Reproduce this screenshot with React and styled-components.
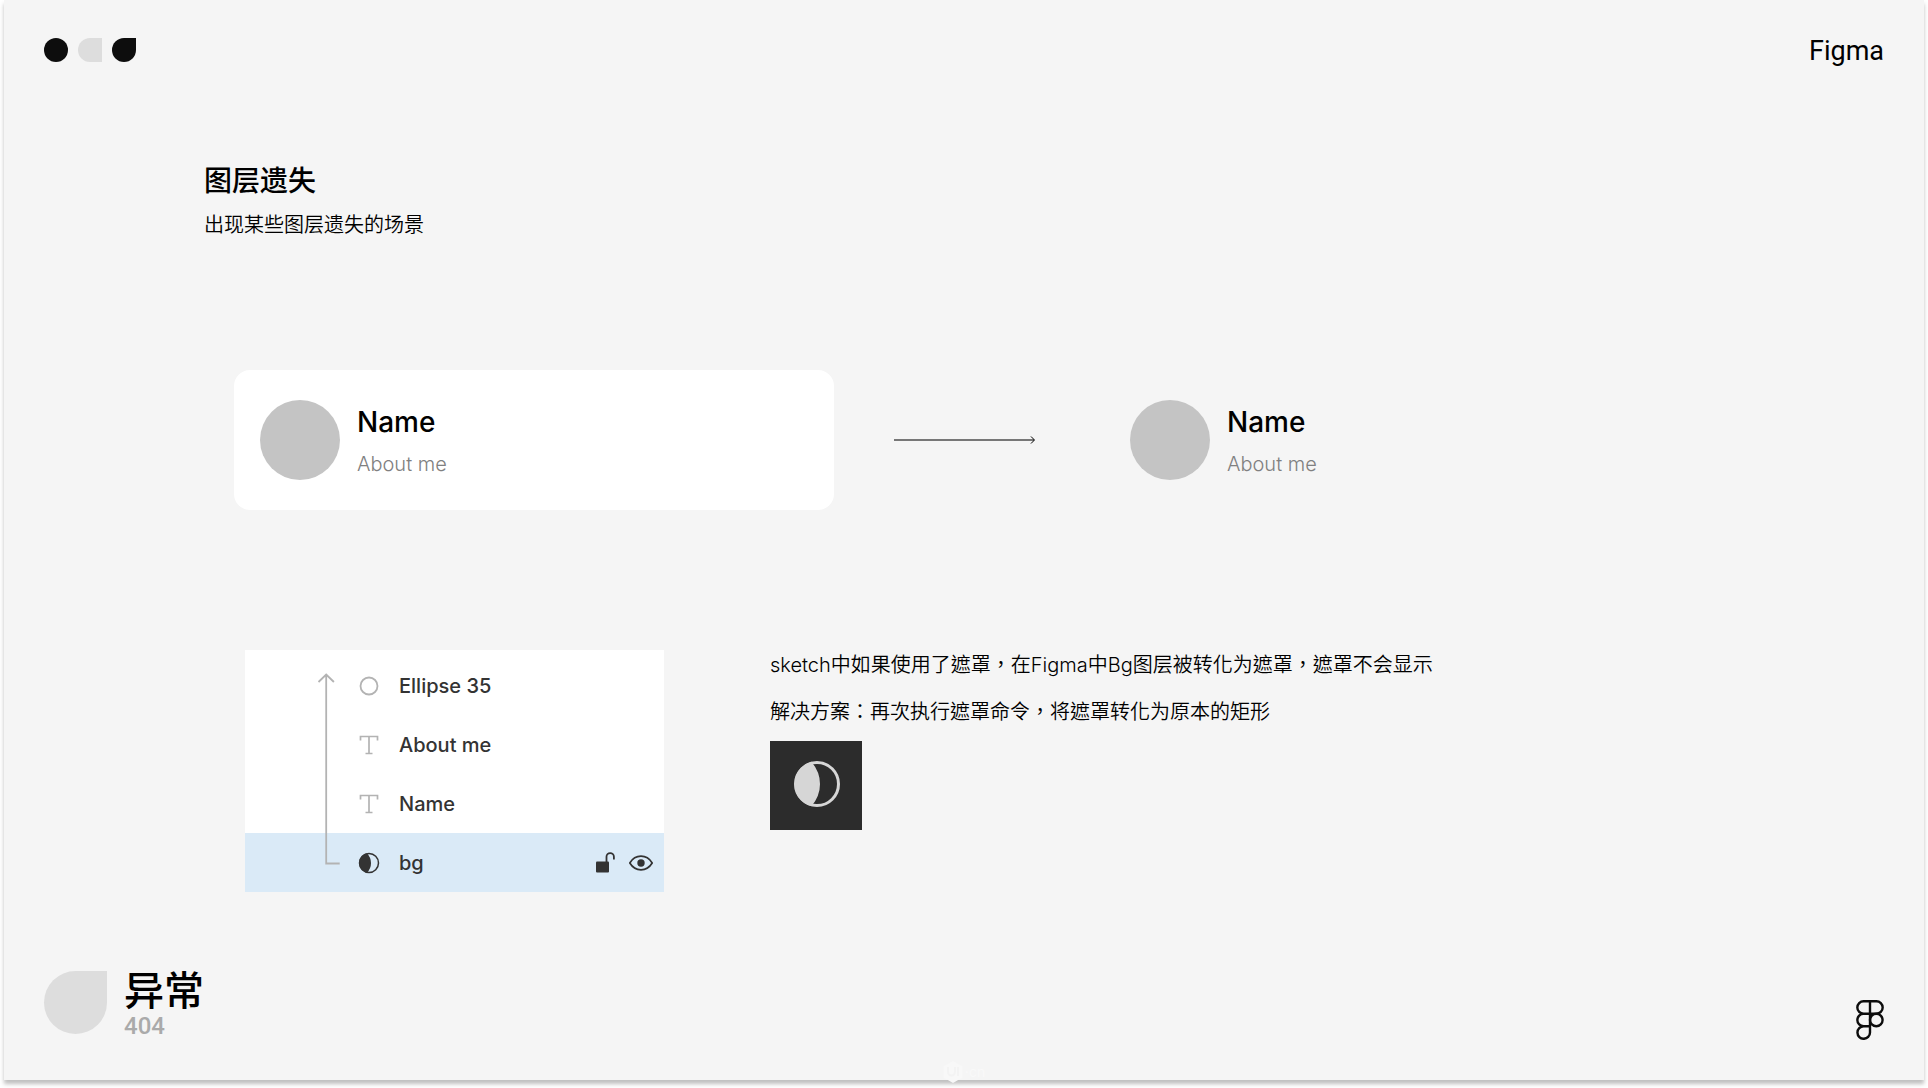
import styled, { createGlobalStyle } from "styled-components";

const layers = [
  { name: "Ellipse 35", type: "ellipse" },
  { name: "About me", type: "text" },
  { name: "Name", type: "text" },
  { name: "bg", type: "mask", selected: true },
];

function LayerIcon({ type }) {
  if (type === "ellipse") {
    return (
      <Icon viewBox="0 0 22 22" $size={22}>
        <circle cx="11" cy="11" r="8.5" stroke="#b3b3b3" strokeWidth="1.8" />
      </Icon>
    );
  }
  if (type === "text") {
    return (
      <Icon viewBox="0 0 22 22" $size={22}>
        <path
          d="M2.5 6.5V2.5h17v4M11 2.5v17M7.5 19.5h7"
          stroke="#b3b3b3"
          strokeWidth="1.7"
        />
      </Icon>
    );
  }
  return (
    <Icon viewBox="0 0 22 22" $size={22}>
      <circle cx="11" cy="11" r="9.5" stroke="#333" strokeWidth="1.5" />
      <path d="M9 1.2A10 10 0 0 0 9 20.8Q13 16.5 13 11T9 1.2Z" fill="#333" />
    </Icon>
  );
}

function Connector() {
  return (
    <ConnectorSvg viewBox="0 0 28 196" fill="none">
      <path
        d="M1.5 12 9.2 4.5l7.7 7.5M9.2 4.5v189h13.5"
        stroke="#b3b3b3"
        strokeWidth="1.8"
      />
    </ConnectorSvg>
  );
}

function Profile() {
  return (
    <ProfileBox>
      <Avatar />
      <ProfileText>
        <ProfileName>Name</ProfileName>
        <ProfileAbout>About me</ProfileAbout>
      </ProfileText>
    </ProfileBox>
  );
}

export default function App() {
  return (
    <>
      <GlobalStyle />
      <Page>
        <Slide>
          <Header>
            <Marks>
              <Mark $radius="50%" />
              <Mark $radius="12px 0 0 12px" $color="#ddd" />
              <Mark $radius="50% 0 50% 50%" />
            </Marks>
            <Brand>Figma</Brand>
          </Header>

          <Content>
            <Title>图层遗失</Title>
            <Subtitle>出现某些图层遗失的场景</Subtitle>

            <Compare>
              <Card>
                <Profile />
              </Card>
              <Arrow viewBox="0 0 142 10" fill="none">
                <path d="M0 5h140" stroke="#777" strokeWidth="2" />
                <path d="M137 1.5 140.5 5 137 8.5" stroke="#000" />
              </Arrow>
              <Profile />
            </Compare>

            <Details>
              <LayerPanel>
                {layers.map((layer) => (
                  <LayerRow key={layer.name} $selected={layer.selected}>
                    <LayerIcon type={layer.type} />
                    <LayerName>{layer.name}</LayerName>
                    {layer.selected && (
                      <RowActions>
                        <IconButton aria-label="Unlock">
                          <Icon viewBox="0 0 24 24" $size={24}>
                            <rect x="1" y="10.5" width="13" height="11" rx="1" fill="#333" />
                            <path
                              d="M11.5 11V5.8a3.7 3.7 0 0 1 7.4 0V8.5"
                              stroke="#333"
                              strokeWidth="1.8"
                            />
                          </Icon>
                        </IconButton>
                        <IconButton aria-label="Toggle visibility">
                          <Icon viewBox="0 0 24 24" $size={24}>
                            <path
                              d="M.8 12Q5 5.2 12 5.2T23.2 12Q19 18.8 12 18.8T.8 12Z"
                              stroke="#333"
                              strokeWidth="1.7"
                            />
                            <circle cx="12" cy="12" r="3.7" fill="#333" />
                          </Icon>
                        </IconButton>
                      </RowActions>
                    )}
                  </LayerRow>
                ))}
                <Connector />
              </LayerPanel>

              <Notes>
                <Note>sketch中如果使用了遮罩，在Figma中Bg图层被转化为遮罩，遮罩不会显示</Note>
                <Note>解决方案：再次执行遮罩命令，将遮罩转化为原本的矩形</Note>
                <MaskTile>
                  <Icon viewBox="0 0 48 48" $size={48}>
                    <circle cx="24" cy="24" r="21.5" stroke="#d6d6d6" strokeWidth="3" />
                    <path
                      d="M18.5 1.8A23 23 0 0 0 18.5 46.2Q27 36 27 24T18.5 1.8Z"
                      fill="#d6d6d6"
                    />
                  </Icon>
                </MaskTile>
              </Notes>
            </Details>
          </Content>

          <Footer>
            <Leaf />
            <Section>
              <SectionTitle>异常</SectionTitle>
              <SectionCode>404</SectionCode>
            </Section>
            <FigmaLogo viewBox="0 0 28 40" fill="none">
              <path
                d="M14 1.2H7.6a6.27 6.27 0 0 0 0 12.54H14ZM14 1.2h6.4a6.27 6.27 0 0 1 0 12.54H14ZM14 13.74H7.6a6.27 6.27 0 0 0 0 12.54H14ZM14 26.28H7.6a6.27 6.27 0 1 0 6.4 6.27Z"
                stroke="#0d0d0d"
                strokeWidth="2.4"
              />
              <circle cx="20.3" cy="20" r="6.3" stroke="#0d0d0d" strokeWidth="2.4" />
            </FigmaLogo>
          </Footer>
        </Slide>
        <Watermark>
          <WatermarkLogo viewBox="0 0 20 22">
            <path d="M10 0 19.5 5.5v11L10 22 .5 16.5v-11Z" fill="#f8f8f8" />
            <path d="M5 6v5a3.5 3.5 0 0 0 7 0V6M15 6v9" fill="none" stroke="#f3f3f3" strokeWidth="2" />
          </WatermarkLogo>
          ·cn
        </Watermark>
      </Page>
    </>
  );
}

const GlobalStyle = createGlobalStyle`
  * {
    box-sizing: border-box;
  }
  body {
    margin: 0;
    background: #fff;
    color: #000;
    font-family: Inter, "Noto Sans CJK SC", sans-serif;
  }
  h1, h2, p, ul {
    margin: 0;
    padding: 0;
  }
`;

const Page = styled.div`
  position: relative;
  display: flex;
  min-height: 100vh;
  padding: 0 4px 8px;
`;

const Slide = styled.div`
  flex: 1;
  display: flex;
  flex-direction: column;
  padding: 36px 40px 40px;
  background: #f5f5f5;
  box-shadow: 0 4px 4px rgba(0, 0, 0, 0.25);
`;

const Header = styled.header`
  display: flex;
  align-items: center;
  justify-content: space-between;
  height: 28px;
`;

const Marks = styled.div`
  display: flex;
  gap: 10px;
`;

const Mark = styled.span`
  width: 24px;
  height: 24px;
  border-radius: ${(props) => props.$radius};
  background: ${(props) => props.$color || "#0d0d0d"};
`;

const Brand = styled.span`
  padding-top: 2px;
  font-family: Roboto, sans-serif;
  font-size: 27px;
  line-height: 28px;
`;

const Content = styled.main`
  padding: 97px 160px 0;
`;

const Title = styled.h1`
  font-size: 28px;
  font-weight: 500;
  line-height: 40px;
`;

const Subtitle = styled.p`
  margin-top: 10px;
  font-size: 20px;
  font-weight: 350;
  line-height: 28px;
`;

const Compare = styled.section`
  display: flex;
  align-items: center;
  margin: 131px 0 0 30px;
`;

const Card = styled.div`
  width: 600px;
  padding: 30px 26px;
  border-radius: 16px;
  background: #fff;
`;

const ProfileBox = styled.div`
  display: flex;
  gap: 17px;
`;

const Avatar = styled.div`
  width: 80px;
  height: 80px;
  border-radius: 50%;
  background: #c4c4c4;
`;

const ProfileText = styled.div`
  padding-top: 2px;
`;

const ProfileName = styled.h2`
  font-size: 28px;
  font-weight: 500;
  line-height: 40px;
`;

const ProfileAbout = styled.p`
  margin-top: 8px;
  color: #808080;
  font-size: 20px;
  font-weight: 350;
  line-height: 28px;
`;

const Arrow = styled.svg`
  width: 142px;
  height: 10px;
  margin: 0 94px 0 60px;
`;

const Details = styled.section`
  display: flex;
  align-items: flex-start;
  gap: 106px;
  margin: 140px 0 0 41px;
`;

const LayerPanel = styled.ul`
  position: relative;
  width: 419px;
  padding-top: 6px;
  background: #fff;
  list-style: none;
`;

const LayerRow = styled.li`
  display: flex;
  align-items: center;
  height: 59px;
  padding: 0 11px 0 113px;
  background: ${(props) => (props.$selected ? "#daeaf7" : "transparent")};
`;

const LayerName = styled.span`
  margin-left: 19px;
  color: #333;
  font-size: 20px;
  font-weight: 450;
`;

const RowActions = styled.div`
  display: flex;
  gap: 10px;
  margin-left: auto;
`;

const IconButton = styled.button`
  display: flex;
  padding: 0;
  border: 0;
  background: none;
`;

const Icon = styled.svg`
  width: ${(props) => props.$size}px;
  height: ${(props) => props.$size}px;
  fill: none;
`;

/* runs over all rows, from the mask up to the top layer */
const ConnectorSvg = styled.svg`
  position: absolute;
  top: 20px;
  left: 72px;
  width: 28px;
  height: 196px;
`;

const Notes = styled.div`
  padding-top: 1px;
  font-family: Inter, "Noto Sans CJK TC", sans-serif;
`;

const Note = styled.p`
  margin-bottom: 19px;
  font-size: 20px;
  font-weight: 350;
  line-height: 28px;
`;

const MaskTile = styled.div`
  display: flex;
  align-items: center;
  justify-content: center;
  width: 92px;
  height: 89px;
  margin-top: -4px;
  padding: 0 0 3px 2px;
  background: #2c2c2c;
`;

const Footer = styled.footer`
  display: flex;
  align-items: flex-end;
  margin-top: auto;
`;

const Leaf = styled.div`
  width: 63px;
  height: 63px;
  margin-bottom: 6px;
  border-radius: 50% 0 50% 50%;
  background: #ddd;
`;

const Section = styled.div`
  margin-left: 17px;
`;

const SectionTitle = styled.h2`
  font-size: 40px;
  font-weight: 500;
  line-height: 42px;
`;

const SectionCode = styled.p`
  color: #aaa;
  font-family: Roboto, sans-serif;
  font-size: 24px;
  font-weight: 500;
  line-height: 28px;
`;

const FigmaLogo = styled.svg`
  width: 28px;
  height: 40px;
  margin-left: auto;
`;

/* sits over the bottom edge of the slide */
const Watermark = styled.div`
  position: absolute;
  bottom: 5px;
  left: 0;
  right: 0;
  display: flex;
  align-items: center;
  justify-content: center;
  gap: 2px;
  color: #f9f9f9;
  font-size: 14px;
  line-height: 20px;
`;

const WatermarkLogo = styled.svg`
  width: 20px;
  height: 22px;
`;
